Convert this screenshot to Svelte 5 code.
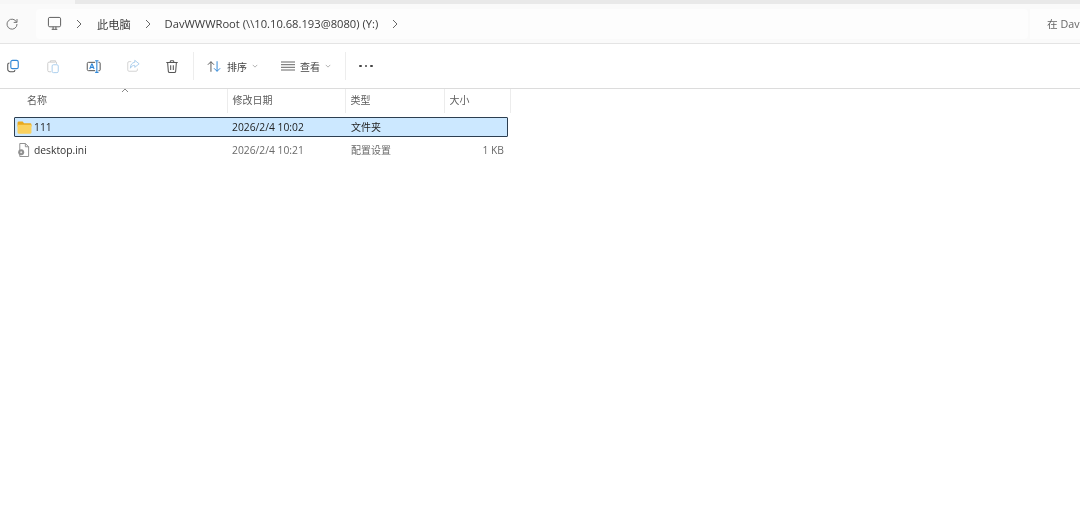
<script>
  const columns = [
    { label: '名称', w: 228 },
    { label: '修改日期', w: 118 },
    { label: '类型', w: 99 },
    { label: '大小', w: 66 }
  ];
</script>

<div class="window">
  <div class="tabstrip"><div class="tab"></div></div>

  <div class="addressbar">
    <svg class="refresh" viewBox="0 0 14 14" width="14" height="14"><path d="M11.6 5.2A5 5 0 1 0 12 7" fill="none" stroke="#777" stroke-width="1"/><path d="M12 2v3.4H8.7" fill="none" stroke="#777" stroke-width="1"/></svg>
    <div class="crumbs">
      <svg class="pc" viewBox="0 0 16 16" width="15" height="15"><rect x="1.5" y="1.5" width="13" height="10" rx="1.5" fill="none" stroke="#555" stroke-width="1"/><path d="M5 14.2h6M6.5 11.5v2.7M9.5 11.5v2.7" stroke="#555" stroke-width="1" fill="none"/></svg>
      <svg class="chev first" viewBox="0 0 6 10" width="6" height="10"><path d="M1 1l4 4-4 4" fill="none" stroke="#666" stroke-width="1"/></svg>
      <span class="crumb">此电脑</span>
      <svg class="chev" viewBox="0 0 6 10" width="6" height="10"><path d="M1 1l4 4-4 4" fill="none" stroke="#666" stroke-width="1"/></svg>
      <span class="crumb">DavWWWRoot (\\10.10.68.193@8080) (Y:)</span>
      <svg class="chev" viewBox="0 0 6 10" width="6" height="10"><path d="M1 1l4 4-4 4" fill="none" stroke="#666" stroke-width="1"/></svg>
    </div>
    <div class="search">在 Dav</div>
  </div>

  <div class="toolbar">
    <div class="tool"><svg viewBox="0 0 16 16" width="14" height="14"><rect x="5.5" y="1.5" width="8.5" height="9.5" rx="2" fill="none" stroke="#2f86d6" stroke-width="1.3"/><path d="M4 4.5A2 2 0 0 0 2 6.5v5.2A2.8 2.8 0 0 0 4.800 14.500h3.400a2 2 0 0 0 2-2" fill="none" stroke="#555" stroke-width="1.200"/></svg></div>
    <div class="tool"><svg viewBox="0 0 16 16" width="14" height="15"><path d="M5 3H3.500A1.500 1.500 0 0 0 2 4.500v8A1.500 1.500 0 0 0 3.500 14H6" fill="none" stroke="#ccc" stroke-width="1.100"/><path d="M11 3H5V1.500h6zM12 3v2" fill="none" stroke="#ccc" stroke-width="1.100"/><rect x="7" y="6" width="7" height="9" rx="1.500" fill="none" stroke="#a9cdec" stroke-width="1.100"/></svg></div>
    <div class="tool"><svg viewBox="0 0 18 16" width="15" height="15"><path d="M11 3H3a1.500 1.500 0 0 0-1.500 1.500v7A1.500 1.500 0 0 0 3 13h8M15 3h1a1 1 0 0 1 1 1v8a1 1 0 0 1-1 1h-1" fill="none" stroke="#555" stroke-width="1.200"/><path d="M11 1h4M13 1v14M11 15h4" fill="none" stroke="#2f86d6" stroke-width="1.300"/><path d="M4.500 11l2.300-6h.6l2.300 6M5.300 9h3.600" fill="none" stroke="#2f86d6" stroke-width="1.300"/></svg></div>
    <div class="tool"><svg viewBox="0 0 16 16" width="14" height="14"><path d="M6 3H3.500A1.500 1.500 0 0 0 2 4.500v8A1.500 1.500 0 0 0 3.500 14h8a1.500 1.500 0 0 0 1.500-1.500V11" fill="none" stroke="#d2d2d2" stroke-width="1.100"/><path d="M10 1.500L15 5.500 10 9.500V7.200C7.500 7.200 6 8.500 5 10.500 5 6.500 7 4 10 3.800z" fill="none" stroke="#a9cdec" stroke-width="1.100"/></svg></div>
    <div class="tool trash"><svg viewBox="0 0 16 16" width="14" height="15"><path d="M1.500 3.500h13M6 3.500V2.400A1 1 0 0 1 7 1.400h2a1 1 0 0 1 1 1v1.100M3 3.500l.8 10a1.500 1.500 0 0 0 1.500 1.300h5.400a1.500 1.500 0 0 0 1.500-1.300l.8-10M6.500 6.500v5.500M9.500 6.500v5.500" fill="none" stroke="#555" stroke-width="1.200"/></svg></div>
    <div class="sep first-sep"></div>
    <button class="menu sort">
      <svg viewBox="0 0 16 14" width="14" height="13"><path d="M4.500 13V1.500M1 5l3.500-3.500L8 5" fill="none" stroke="#555" stroke-width="1.100"/><path d="M11.500 1v11.500M8 9l3.500 3.500L15 9" fill="none" stroke="#2f86d6" stroke-width="1.100"/></svg>
      <span>排序</span>
      <svg class="caret" viewBox="0 0 8 5" width="6" height="4"><path d="M1 1l3 3 3-3" fill="none" stroke="#999" stroke-width="1"/></svg>
    </button>
    <button class="menu view">
      <svg viewBox="0 0 14 10" width="14" height="10"><path d="M0 1h14M0 3.700h14M0 6.300h14M0 9h14" stroke="#666" stroke-width="1" fill="none"/></svg>
      <span>查看</span>
      <svg class="caret" viewBox="0 0 8 5" width="6" height="4"><path d="M1 1l3 3 3-3" fill="none" stroke="#999" stroke-width="1"/></svg>
    </button>
    <div class="sep"></div>
    <div class="dots"><i></i><i></i><i></i></div>
  </div>

  <div class="list">
    <div class="sort-arrow"><svg viewBox="0 0 8 5" width="8" height="5"><path d="M1 4l3-3 3 3" fill="none" stroke="#888" stroke-width="1"/></svg></div>
    <div class="header">
      {#each columns as c}
        <div class="col" style="width:{c.w}px"><span>{c.label}</span></div>
      {/each}
    </div>
    <div class="row selected">
      <svg class="ficon" viewBox="0 0 16 14" width="15" height="13"><path d="M0.500 2A1.500 1.500 0 0 1 2 .5h4l1.500 2H14a1.500 1.500 0 0 1 1.500 1.500v2H.5z" fill="#e8a91e"/><path d="M.5 4h15v8.500a1.200 1.200 0 0 1-1.200 1.200H1.700A1.200 1.200 0 0 1 .5 12.500z" fill="#fad15e"/></svg>
      <span class="name">111</span>
      <span class="date">2026/2/4 10:02</span>
      <span class="type">文件夹</span>
    </div>
    <div class="row plain">
      <svg class="ficon" viewBox="0 0 14 15" width="13" height="14"><path d="M3 .5h6l3.500 3.500v10.500H3zM9 .5V4h3.500" fill="#fff" stroke="#8a8a8a" stroke-width="1"/><circle cx="4.500" cy="10" r="3.200" fill="#8f8f8f"/><circle cx="4.500" cy="10" r="1.100" fill="#e5e5e5"/></svg>
      <span class="name">desktop.ini</span>
      <span class="date">2026/2/4 10:21</span>
      <span class="type">配置设置</span>
      <span class="size">1 KB</span>
    </div>
  </div>
</div>

<style>
  :global(body) {
    margin: 0;
    background: #fff;
  }

  .window {
    width: 1080px;
    height: 521px;
    overflow: hidden;
    background: #fff;
    font-family: "Open Sans", "Noto Sans CJK SC", sans-serif;
    color: #333;
    filter: blur(0.3px);
  }

  .tabstrip {
    height: 4px;
    background: #e9e9e9;
  }

  .tab {
    width: 75px;
    height: 4px;
    background: #f7f7f7;
  }

  .addressbar {
    height: 40px;
    box-sizing: border-box;
    display: flex;
    align-items: center;
    background: #fafafa;
    border-bottom: 1px solid #e4e4e4;
  }

  .refresh {
    margin-left: 5px;
    flex: none;
  }

  .crumbs {
    width: 992px;
    height: 30px;
    margin-left: 17px;
    flex: none;
    display: flex;
    align-items: center;
    background: #fdfdfd;
    border-radius: 4px;
    font-size: 11.200px;
    color: #3a3a3a;
    box-sizing: border-box;
    padding-left: 11px;
  }

  .pc {
    flex: none;
  }

  .chev {
    flex: none;
    margin-left: 14px;
    margin-right: 14px;
  }

  .chev.first {
    margin-right: 15px;
  }

  .crumb {
    white-space: nowrap;
  }

  .search {
    margin-left: 2px;
    flex: 1;
    height: 30px;
    background: #fdfdfd;
    font-size: 10.700px;
    line-height: 30px;
    padding-left: 17px;
    white-space: nowrap;
    color: #666;
  }

  .toolbar {
    height: 45px;
    box-sizing: border-box;
    display: flex;
    align-items: center;
    gap: 14px;
    border-bottom: 1px solid #dcdcdc;
    background: #fff;
  }

  .tool {
    width: 26px;
    flex: none;
    display: flex;
    justify-content: center;
  }

  .trash {
    width: 24px;
  }

  .sep {
    width: 1px;
    height: 28px;
    flex: none;
    background: #ededed;
  }

  .first-sep {
    margin-left: -5px;
  }

  .menu {
    border: 0;
    background: none;
    padding: 0;
    display: flex;
    align-items: center;
    font: inherit;
    font-size: 10px;
    color: #444;
    flex: none;
    white-space: nowrap;
  }

  .menu span {
    margin-left: 6px;
    margin-right: 5px;
  }

  .view span {
    margin-left: 5px;
  }

  .sort {
    width: 60px;
    margin-left: -1px;
  }

  .view {
    width: 50px;
  }

  .dots {
    display: flex;
    gap: 3px;
    margin-left: -1px;
  }

  .dots i {
    width: 2.500px;
    height: 2.500px;
    border-radius: 50%;
    background: #444;
  }

  .list {
    position: relative;
    font-size: 10.300px;
  }

  .sort-arrow {
    position: absolute;
    left: 121px;
    top: -1px;
    line-height: 0;
  }

  .header {
    height: 24px;
    display: flex;
    margin-bottom: 4px;
  }

  .col {
    box-sizing: border-box;
    height: 24px;
    border-right: 1px solid #ececec;
    padding-left: 4.500px;
    line-height: 22px;
    font-size: 10px;
    color: #5c5c5c;
    flex: none;
  }

  .col:first-child {
    padding-left: 27px;
  }

  .row {
    box-sizing: border-box;
    width: 494px;
    height: 20px;
    margin-left: 14px;
    display: flex;
    align-items: center;
    position: relative;
    white-space: nowrap;
  }

  .selected {
    background: #cce8ff;
    border: 1px solid #2c3e50;
    border-radius: 1px;
    color: #222;
    margin-bottom: 3px;
  }

  .plain {
    color: #6a6a6a;
  }

  .ficon {
    position: absolute;
    left: 2px;
    top: 3px;
  }

  .plain .ficon {
    left: 3px;
  }

  .name {
    position: absolute;
    left: 19px;
  }

  .plain .name {
    left: 20px;
    color: #333;
  }

  .date {
    position: absolute;
    left: 218px;
  }

  .selected .date {
    left: 217px;
  }

  .type {
    position: absolute;
    left: 337px;
    font-size: 10px;
    margin-top: -1px;
  }

  .selected .type {
    left: 336px;
  }

  .size {
    position: absolute;
    right: 4px;
  }
</style>
